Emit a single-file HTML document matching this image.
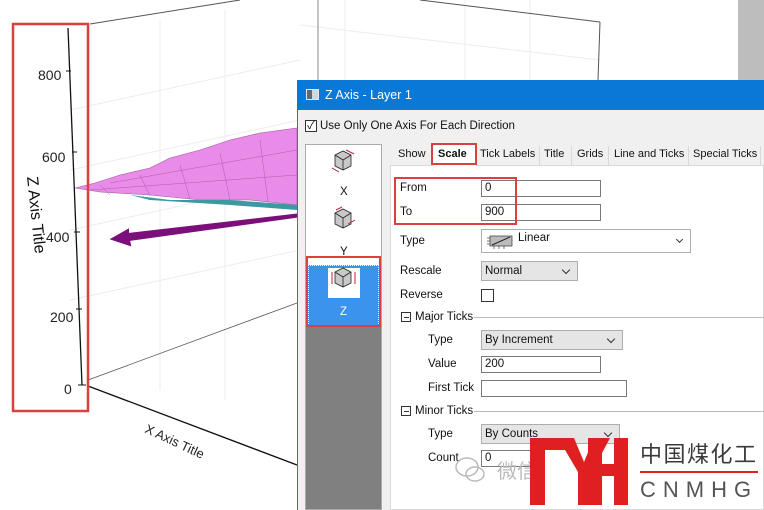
<!DOCTYPE html>
<html><head><meta charset="utf-8"><style>
*{margin:0;padding:0;box-sizing:border-box}
body{width:764px;height:510px;overflow:hidden;position:relative;background:#fff;font-family:"Liberation Sans","Noto Sans CJK SC",sans-serif;font-size:12px;color:#111}
.a{position:absolute;white-space:nowrap}
.lbl{position:absolute;font-size:11.5px;color:#111;white-space:nowrap}
.inp{position:absolute;background:#fff;border:1px solid #7a7a7a;height:17px;font-size:11.5px;padding-left:3px;line-height:15px}
.sel{position:absolute;background:#e5e5e5;border:1px solid #adadad;height:20px;font-size:11.5px;padding-left:3px;line-height:18px}
.sel:after{content:"";position:absolute;right:8px;top:5px;width:5px;height:5px;border-right:1px solid #333;border-bottom:1px solid #333;transform:rotate(45deg)}
.tab{position:absolute;top:146px;height:19px;font-size:11px;line-height:17px;white-space:nowrap}
.sep{position:absolute;top:146px;width:1px;height:19px;background:#d9d9d9}
.red{position:absolute;border:2.5px solid #d9413f}
</style></head><body>
<svg class="a" style="left:0;top:0" width="764" height="510">
<rect x="738" y="0" width="26" height="80" fill="#bdbdbd"/>
<g stroke="#ececec" stroke-width="1">
<line x1="90" y1="25" x2="90" y2="380"/><line x1="160" y1="20" x2="160" y2="390"/><line x1="225" y1="10" x2="225" y2="400"/><line x1="345" y1="0" x2="345" y2="80"/><line x1="465" y1="0" x2="465" y2="80"/><line x1="530" y1="0" x2="530" y2="80"/>
<line x1="70" y1="110" x2="300" y2="60"/><line x1="70" y1="170" x2="300" y2="120"/><line x1="70" y1="230" x2="300" y2="180"/><line x1="70" y1="300" x2="300" y2="250"/><line x1="300" y1="25" x2="600" y2="60"/>
</g>
<line x1="90" y1="24" x2="240" y2="0" stroke="#555"/>
<line x1="420" y1="0" x2="600" y2="22" stroke="#555"/><line x1="600" y1="22" x2="598" y2="80" stroke="#555"/>
<line x1="318" y1="0" x2="318" y2="80" stroke="#888"/>
<line x1="88" y1="380" x2="297" y2="303" stroke="#555" stroke-width="0.8"/>
<line x1="68" y1="28" x2="82" y2="385" stroke="#111" stroke-width="1.3"/>
<g stroke="#111"><line x1="66" y1="71" x2="71" y2="71"/><line x1="72" y1="152" x2="77" y2="152"/><line x1="74" y1="232" x2="80" y2="232"/><line x1="76" y1="309" x2="82" y2="309"/><line x1="78" y1="385" x2="86" y2="385"/></g>
<line x1="88" y1="386" x2="297" y2="465" stroke="#111" stroke-width="1.3"/>
<g font-size="14" fill="#222" font-family="Liberation Sans"><text x="38" y="80">800</text><text x="42" y="162">600</text><text x="46" y="242">400</text><text x="50" y="322">200</text><text x="64" y="394">0</text></g>
<text x="0" y="0" font-size="16" fill="#111" transform="translate(27,177) rotate(84)">Z Axis Title</text>
<text x="0" y="0" font-size="13" fill="#222" transform="translate(144,432) rotate(25)">X Axis Title</text>
<path d="M75 188 L95 183 L120 175 L150 168 L170 158 L200 150 L230 140 L260 133 L297 128 L297 205 L250 200 L200 200 L150 195 L100 192 Z" fill="#e98be8" stroke="#9a5c9a" stroke-width="0.6"/>
<path d="M130 195 L170 200 L230 200 L297 205 L297 210 L230 205 L150 200 Z" fill="#3a9aa0"/>
<g stroke="#b05ab0" stroke-width="0.5"><line x1="100" y1="185" x2="110" y2="195"/><line x1="140" y1="175" x2="150" y2="196"/><line x1="180" y1="165" x2="190" y2="199"/><line x1="220" y1="153" x2="230" y2="200"/><line x1="260" y1="140" x2="268" y2="202"/><line x1="110" y1="183" x2="297" y2="150"/><line x1="90" y1="190" x2="297" y2="175"/></g>
<path d="M388 204 L128 234 L128 230 L112 239 L130 245 L129 240 Z" fill="#7b0f7b" stroke="#7b0f7b" stroke-width="2"/>
<rect x="13" y="24" width="75" height="387" fill="none" stroke="#d9413f" stroke-width="2.5"/>
</svg>
<div class="a" style="left:297px;top:80px;width:467px;height:430px;background:#f0f0f0;border-left:1px solid #1a7ad4"></div>
<div class="a" style="left:297px;top:80px;width:467px;height:30px;background:#0a78d7;color:#fff;font-size:12.5px;line-height:30px;padding-left:28px">Z Axis - Layer 1</div>
<div class="a" style="left:306px;top:89px;width:13px;height:11px;background:#cfd8e0;border:1px solid #e0e6ee"><div style="width:5px;height:9px;background:#5a6b7c"></div></div>
<div class="a" style="left:305px;top:120px;width:12px;height:12px;border:1px solid #333;background:#fff;font-size:11px;line-height:10px;text-align:center">✓</div>
<div class="lbl" style="left:320px;top:120px">Use Only One Axis For Each Direction</div>
<div class="a" style="left:305px;top:144px;width:77px;height:366px;background:#808080;border:1px solid #aaa"></div>
<div class="a" style="left:306px;top:145px;width:75px;height:182px;background:#fff"></div>
<div class="a" style="left:308px;top:265px;width:71px;height:61px;background:#3b93ee;border:1px dotted #fff"></div>
<div class="a" style="left:328px;top:268px;width:32px;height:30px;background:#fff"></div>
<svg class="a" style="left:330px;top:148px" width="30" height="170">
<g fill="#c8c8c8" stroke="#222" stroke-width="0.8">
<path d="M5 7 L13 3 L21 7 L21 18 L13 22 L5 18Z"/><path d="M13 12 L13 22 M5 7 L13 12 L21 7" fill="none"/>
<path d="M5 65 L13 61 L21 65 L21 76 L13 80 L5 76Z"/><path d="M13 70 L13 80 M5 65 L13 70 L21 65" fill="none"/>
<path d="M5 124 L13 120 L21 124 L21 135 L13 139 L5 135Z"/><path d="M13 129 L13 139 M5 124 L13 129 L21 124" fill="none"/></g>
<g stroke="#c0203a" stroke-width="1"><line x1="16" y1="2" x2="24" y2="6"/><line x1="2" y1="20" x2="9" y2="24"/><line x1="18" y1="76" x2="25" y2="72"/><line x1="6" y1="62" x2="12" y2="59"/><line x1="2" y1="124" x2="2" y2="136"/><line x1="25" y1="124" x2="25" y2="136"/></g>
</svg>
<div class="lbl" style="left:340px;top:186px">X</div>
<div class="lbl" style="left:340px;top:246px">Y</div>
<div class="lbl" style="left:340px;top:306px;color:#fff">Z</div>
<div class="red" style="left:306px;top:256px;width:75px;height:71px"></div>
<div class="a" style="left:390px;top:165px;width:374px;height:345px;background:#fff;border:1px solid #d9d9d9"></div>
<div class="a" style="left:432px;top:144px;width:45px;height:22px;background:#fff;border:1px solid #d9d9d9;border-bottom:none"></div>
<div class="tab" style="left:398px">Show</div>
<div class="tab" style="left:438px;font-weight:bold">Scale</div>
<div class="tab" style="left:480px">Tick Labels</div><div class="sep" style="left:539px"></div>
<div class="tab" style="left:544px">Title</div><div class="sep" style="left:571px"></div>
<div class="tab" style="left:577px">Grids</div><div class="sep" style="left:608px"></div>
<div class="tab" style="left:614px">Line and Ticks</div><div class="sep" style="left:688px"></div>
<div class="tab" style="left:693px">Special Ticks</div><div class="sep" style="left:760px"></div>
<div class="red" style="left:431px;top:143px;width:46px;height:22px"></div>
<div class="lbl" style="left:400px;top:182px">From</div><div class="inp" style="left:481px;top:180px;width:120px">0</div>
<div class="lbl" style="left:400px;top:206px">To</div><div class="inp" style="left:481px;top:204px;width:120px">900</div>
<div class="red" style="left:394px;top:177px;width:123px;height:48px"></div>
<div class="lbl" style="left:400px;top:235px">Type</div>
<div class="inp" style="left:481px;top:229px;width:210px;height:24px;border-color:#adadad;padding-left:36px;line-height:17px">Linear</div>
<svg class="a" style="left:486px;top:233px" width="30" height="18"><rect x="4" y="3" width="22" height="10" fill="#bbb" stroke="#333" stroke-width="0.7"/><line x1="6" y1="12" x2="24" y2="4" stroke="#222"/><g stroke="#222" stroke-width="0.6"><line x1="1" y1="5" x2="4" y2="5"/><line x1="1" y1="8" x2="4" y2="8"/><line x1="1" y1="11" x2="4" y2="11"/><line x1="8" y1="13" x2="8" y2="16"/><line x1="13" y1="13" x2="13" y2="16"/><line x1="18" y1="13" x2="18" y2="16"/></g></svg>
<div class="a" style="left:677px;top:237px;width:5px;height:5px;border-right:1px solid #333;border-bottom:1px solid #333;transform:rotate(45deg)"></div>
<div class="lbl" style="left:400px;top:265px">Rescale</div><div class="sel" style="left:481px;top:261px;width:97px">Normal</div>
<div class="lbl" style="left:400px;top:289px">Reverse</div><div class="a" style="left:481px;top:289px;width:13px;height:13px;border:1px solid #333;background:#fff"></div>
<div class="a" style="left:401px;top:312px;width:10px;height:10px;border:1px solid #333;background:#fff"><div style="margin:3.5px 1.5px;height:1px;background:#333"></div></div>
<div class="lbl" style="left:415px;top:311px">Major Ticks</div><div class="a" style="left:474px;top:317px;width:290px;height:1px;background:#bbb"></div>
<div class="lbl" style="left:428px;top:334px">Type</div><div class="sel" style="left:481px;top:330px;width:142px">By Increment</div>
<div class="lbl" style="left:428px;top:358px">Value</div><div class="inp" style="left:481px;top:356px;width:120px">200</div>
<div class="lbl" style="left:428px;top:382px">First Tick</div><div class="inp" style="left:481px;top:380px;width:146px"></div>
<div class="a" style="left:401px;top:406px;width:10px;height:10px;border:1px solid #333;background:#fff"><div style="margin:3.5px 1.5px;height:1px;background:#333"></div></div>
<div class="lbl" style="left:415px;top:405px">Minor Ticks</div><div class="a" style="left:474px;top:411px;width:290px;height:1px;background:#bbb"></div>
<div class="lbl" style="left:428px;top:428px">Type</div><div class="sel" style="left:481px;top:424px;width:139px">By Counts</div>
<div class="lbl" style="left:428px;top:452px">Count</div><div class="inp" style="left:481px;top:450px;width:60px">0</div>
<div class="a" style="left:497px;top:455px;font-size:20px;color:#bbb">微信</div>
<svg class="a" style="left:450px;top:455px" width="40" height="30"><g fill="none" stroke="#bbb" stroke-width="1.5"><ellipse cx="17" cy="12" rx="11" ry="9"/><ellipse cx="25" cy="19" rx="9" ry="7"/></g></svg>
<svg class="a" style="left:528px;top:436px" width="104" height="72"><g fill="#e02020">
<rect x="2" y="2" width="15" height="67"/><rect x="2" y="2" width="42" height="12"/>
<polygon points="30,2 46,2 56,26 66,2 82,2 64,36 64,69 50,69 50,36"/>
<rect x="60" y="2" width="14" height="67"/><rect x="86" y="2" width="14" height="67"/><rect x="60" y="28" width="40" height="12"/></g></svg>
<div class="a" style="left:640px;top:438px;font-size:22px;letter-spacing:1.5px;color:#3a3a3a;font-family:'Noto Sans CJK SC',sans-serif;line-height:30px">中国煤化工</div>
<div class="a" style="left:640px;top:471px;width:118px;height:2px;background:#e02020"></div>
<div class="a" style="left:640px;top:476px;font-size:22px;letter-spacing:7px;color:#555;line-height:28px">CNMHG</div>
</body></html>
